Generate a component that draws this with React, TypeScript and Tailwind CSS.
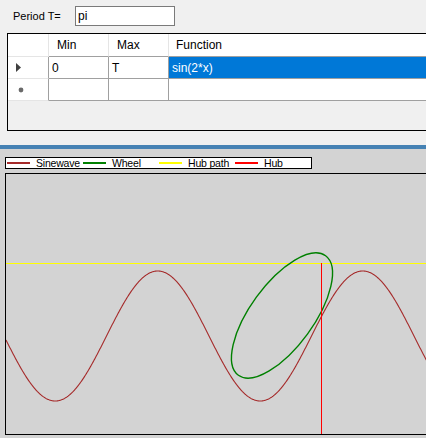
import React from "react";

const sinePoints = (() => {
  const pts: string[] = [];
  for (let x = 6; x <= 427; x += 0.5) {
    const y = 336 + 65 * Math.sin((2 * Math.PI * (x - 4)) / 205);
    pts.push(`${x},${y.toFixed(2)}`);
  }
  return pts.join(" ");
})();

const legend = [
  { label: "Sinewave", color: "#a52a2a" },
  { label: "Wheel", color: "#008000" },
  { label: "Hub path", color: "#ffff00" },
  { label: "Hub", color: "#ff0000" },
];

export default function App() {
  return (
    <div className="w-[426px] h-[438px] overflow-hidden flex flex-col bg-[#d3d3d3] text-black font-['Liberation_Sans',Arial,sans-serif]">
      {/* Top panel */}
      <div className="h-[145px] shrink-0 bg-[#f0f0f0] flex flex-col">
        <div className="mt-[6px] h-[20px] flex items-center">
          <span className="ml-[13px] w-[62px] text-[11px]">Period T=</span>
          <div className="w-[100px] h-[20px] border border-[#7a7a7a] bg-white pl-[2px] text-[12px] leading-[18px]">
            pi
          </div>
        </div>

        {/* Data grid */}
        <div className="mt-[7px] ml-[7px] h-[98px] border-l border-t border-b border-black text-[12px] flex flex-col">
          <div className="h-[23px] flex bg-white">
            <div className="w-[41px] border-r border-b border-[#e5e5e5]" />
            <div className="w-[60px] border-r border-[#e5e5e5] border-b-[#a0a0a0] border-b pl-[8px] flex items-center">Min</div>
            <div className="w-[60px] border-r border-[#e5e5e5] border-b-[#a0a0a0] border-b pl-[8px] flex items-center">Max</div>
            <div className="flex-1 border-b border-[#a0a0a0] pl-[7px] flex items-center">Function</div>
          </div>
          <div className="h-[22px] flex bg-white">
            <div className="w-[41px] border-r border-b border-[#e5e5e5] border-r-[#a0a0a0] flex items-center pl-[8px]">
              <svg width="5" height="9" viewBox="0 0 5 9">
                <path d="M0 0 L5 4.5 L0 9 Z" fill="#404040" />
              </svg>
            </div>
            <div className="w-[60px] border-r border-b border-[#a0a0a0] pl-[3px] flex items-center">0</div>
            <div className="w-[60px] border-r border-b border-[#a0a0a0] pl-[3px] flex items-center">T</div>
            <div className="flex-1 border-b border-[#a0a0a0] bg-[#0078d7] text-white pl-[3px] flex items-center">sin(2*x)</div>
          </div>
          <div className="h-[22px] flex bg-white">
            <div className="w-[41px] border-r border-b border-[#e5e5e5] border-r-[#a0a0a0] flex items-center pl-[10px]">
              <svg width="6" height="6" viewBox="0 0 6 6">
                <circle cx="3" cy="3" r="2.4" fill="#6a6a6a" />
              </svg>
            </div>
            <div className="w-[60px] border-r border-b border-[#a0a0a0]" />
            <div className="w-[60px] border-r border-b border-[#a0a0a0]" />
            <div className="flex-1 border-b border-[#a0a0a0]" />
          </div>
          <div className="flex-1 bg-[#f0f0f0]" />
        </div>
      </div>

      {/* Splitter */}
      <div className="h-[4px] shrink-0 bg-[#4682b4]" />

      {/* Chart panel */}
      <div className="flex-1 pl-[5px] pt-[8px] flex flex-col">
        <div className="w-[307px] h-[12px] border border-black bg-white flex items-center pl-[1px] text-[10.5px] tracking-[-0.2px]">
          {legend.map((l) => (
            <div key={l.label} className="w-[77px] flex items-center">
              <svg width="23" height="2" className="block">
                <line x1="0" y1="1" x2="23" y2="1" stroke={l.color} strokeWidth="2" />
              </svg>
              <span className="ml-[6px] leading-[10px]">{l.label}</span>
            </div>
          ))}
        </div>

        <div className="mt-[4px] h-[262px] border-l border-t border-b border-black">
          <svg width="421" height="260" className="block">
            <g transform="translate(-6,-174)">
              <line x1="6" y1="263.5" x2="430" y2="263.5" stroke="#ffff00" strokeWidth="1" />
              <polyline points={sinePoints} fill="none" stroke="#a52a2a" strokeWidth="1.1" />
              <ellipse
                cx="282"
                cy="315.5"
                rx="74"
                ry="31.5"
                transform="rotate(-53.9 282 315.5)"
                fill="none"
                stroke="#008000"
                strokeWidth="1.4"
              />
              <line x1="321.5" y1="263" x2="321.5" y2="440" stroke="#ff0000" strokeWidth="1" />
            </g>
          </svg>
        </div>
      </div>
    </div>
  );
}
